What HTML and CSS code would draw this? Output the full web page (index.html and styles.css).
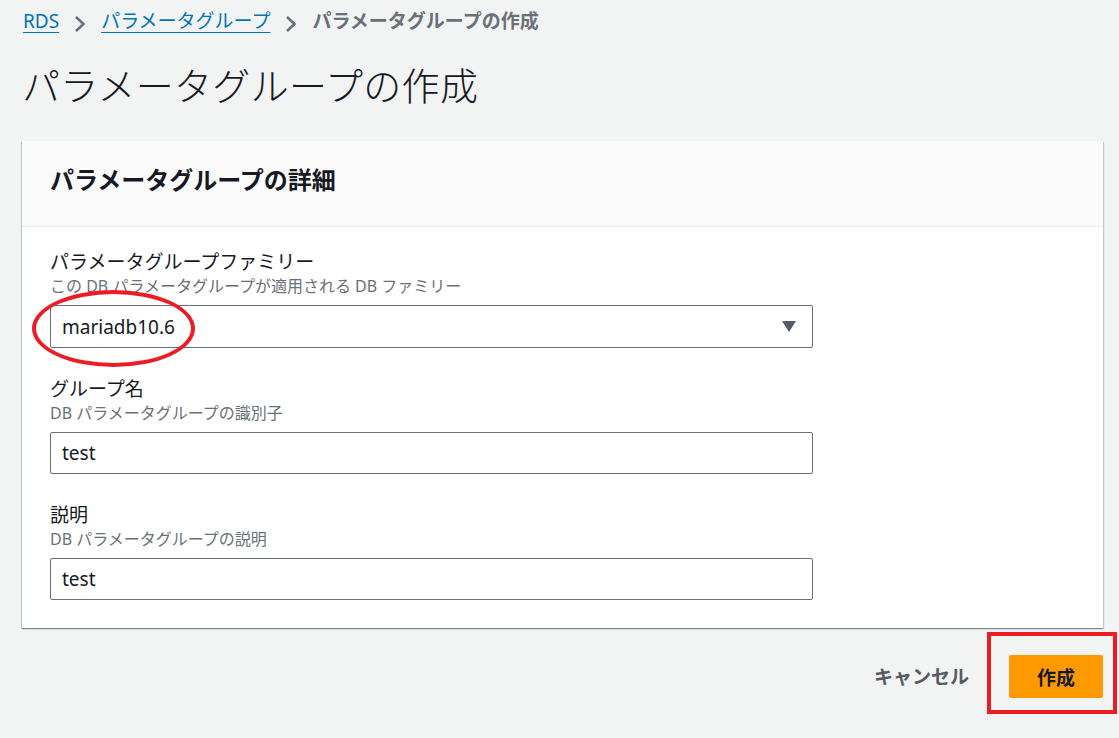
FILE: index.html
```html
<!DOCTYPE html>
<html lang="ja">
<head>
<meta charset="utf-8">
<title>パラメータグループの作成</title>
<link rel="stylesheet" href="styles.css">
</head>
<body>
<div class="page">
  <nav class="breadcrumbs">
    <a class="crumb-link" href="#">RDS</a>
    <svg class="chev" width="14" height="18" viewBox="0 0 14 18"><path d="M3 2 L10.5 9 L3 16" fill="none" stroke="#687078" stroke-width="2.6" stroke-linejoin="miter"/></svg>
    <a class="crumb-link" href="#">パラメータグループ</a>
    <svg class="chev" width="14" height="18" viewBox="0 0 14 18"><path d="M3 2 L10.5 9 L3 16" fill="none" stroke="#687078" stroke-width="2.6" stroke-linejoin="miter"/></svg>
    <span class="crumb-current">パラメータグループの作成</span>
  </nav>

  <h1 class="title">パラメータグループの作成</h1>

  <section class="card">
    <header class="card-header">
      <h2 class="card-title">パラメータグループの詳細</h2>
    </header>
    <div class="card-body">
      <div class="field">
        <div class="label">パラメータグループファミリー</div>
        <div class="desc">この DB パラメータグループが適用される DB ファミリー</div>
        <div class="control select">
          <span class="value">mariadb10.6</span>
          <svg class="caret" width="14" height="11" viewBox="0 0 14 11"><path d="M0 0 H14 L7 11 Z" fill="#545b64"/></svg>
        </div>
      </div>
      <div class="field">
        <div class="label">グループ名</div>
        <div class="desc">DB パラメータグループの識別子</div>
        <div class="control input"><span class="value">test</span></div>
      </div>
      <div class="field">
        <div class="label">説明</div>
        <div class="desc">DB パラメータグループの説明</div>
        <div class="control input"><span class="value">test</span></div>
      </div>
    </div>
  </section>

  <div class="actions">
    <button class="btn-cancel">キャンセル</button>
    <button class="btn-primary">作成</button>
  </div>
</div>

<div class="mark-ellipse"></div>
<div class="mark-rect"></div>
</body>
</html>
```

FILE: styles.css
```css
html, body {
  margin: 0;
  padding: 0;
}
body {
  background: #f2f3f3;
  font-family: "Noto Sans", "Noto Sans CJK JP", sans-serif;
  color: #16191f;
  position: relative;
  width: 1119px;
  height: 738px;
  overflow: hidden;
}
.page {
  padding: 8px 16px 0 22px;
}
.breadcrumbs {
  display: flex;
  align-items: center;
  height: 26px;
  font-size: 19px;
  line-height: 26px;
  padding-left: 1px;
}
.crumb-link {
  color: #0073bb;
  text-decoration: underline;
  text-underline-offset: 4px;
  text-decoration-thickness: 1px;
}
.chev {
  margin: 5px 14px 0 14px;
  flex: none;
}
.crumb-current {
  color: #687078;
  font-weight: 700;
}
.title {
  margin: 28px 0 0 0;
  font-size: 38px;
  letter-spacing: 0.3px;
  line-height: 46px;
  font-weight: 300;
  color: #16191f;
}
.card {
  margin-top: 33px;
  background: #fff;
  box-shadow: 0 1px 1px 0 rgba(0, 28, 36, 0.3), 1px 1px 1px 0 rgba(0, 28, 36, 0.15), -1px 1px 1px 0 rgba(0, 28, 36, 0.15);
}
.card-header {
  background: #fafafa;
  border-bottom: 1px solid #eaeded;
  padding: 24px 28px 31px 28px;
}
.card-title {
  margin: 0;
  font-size: 24px;
  line-height: 30px;
  font-weight: 700;
  color: #16191f;
}
.card-body {
  padding: 22px 28px 28px 28px;
  display: flex;
  flex-direction: column;
  gap: 28px;
}
.field {
  width: 763px;
}
.label {
  font-size: 19px;
  line-height: 26px;
  color: #16191f;
}
.desc {
  font-size: 16px;
  line-height: 22px;
  color: #687078;
  margin-bottom: 8px;
}
.control {
  box-sizing: border-box;
  height: 42px;
  border: 1px solid #687078;
  border-radius: 2px;
  background: #fff;
  display: flex;
  align-items: center;
  padding: 0 16px 0 11px;
  font-size: 19px;
  color: #16191f;
}
.select {
  height: 43px;
  justify-content: space-between;
}
.caret {
  flex: none;
}
.actions {
  display: flex;
  justify-content: flex-end;
  align-items: center;
  gap: 40px;
  margin-top: 27px;
}
.btn-cancel {
  background: none;
  border: none;
  padding: 0;
  font-family: inherit;
  font-size: 19px;
  font-weight: 700;
  color: #545b64;
  line-height: 26px;
}
.btn-primary {
  width: 94px;
  height: 43px;
  background: #ff9900;
  border: none;
  border-radius: 2px;
  font-family: inherit;
  font-size: 19px;
  font-weight: 700;
  color: #16191f;
  padding: 0;
}
.mark-ellipse {
  position: absolute;
  left: 32px;
  top: 290px;
  width: 163px;
  height: 77px;
  box-sizing: border-box;
  border: 4px solid #ec1c24;
  border-radius: 50%;
}
.mark-rect {
  position: absolute;
  left: 987px;
  top: 632px;
  width: 130px;
  height: 82px;
  box-sizing: border-box;
  border: 4px solid #ec1c24;
}
```
